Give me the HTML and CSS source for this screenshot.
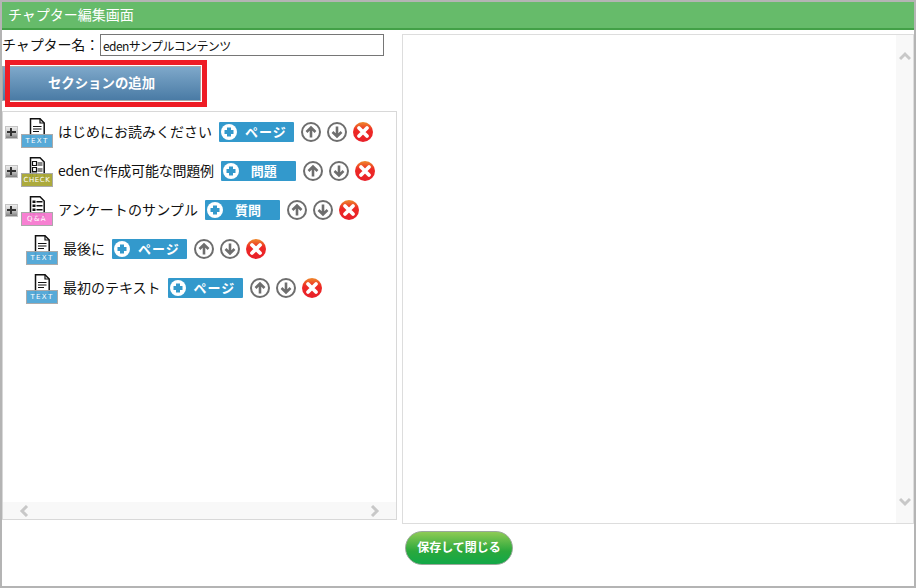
FILE: index.html
```html
<!DOCTYPE html>
<html lang="ja">

<head>
    <meta charset="utf-8">
    <title>チャプター編集画面</title>
    <link rel="stylesheet" href="styles.css">
</head>

<body>
<svg class="defs" width="0" height="0">
    <symbol id="doc-text" viewBox="0 0 16 22">
        <path d="M1.5 .8H11L15.2 5V21.3H1.500Z" fill="#fff" stroke="#111" stroke-width="1.500"/>
        <path d="M11 .8V5H15.200" fill="none" stroke="#111" stroke-width="1.200"/>
        <path d="M4 8.500H12.500M4 11H12.500M4 13.500H10" stroke="#111" stroke-width="1.200"/>
    </symbol>
    <symbol id="doc-check" viewBox="0 0 16 22">
        <path d="M1.500 .8H11L15.200 5V21.300H1.500Z" fill="#fff" stroke="#111" stroke-width="1.500"/>
        <path d="M3.500 4.500H7.500V8.500H3.500ZM3.500 10.500H7.500V14.500H3.500ZM3.500 16H7.500V20H3.500Z" fill="#fff" stroke="#111" stroke-width="1.200"/>
        <path d="M8.500 6H13.500M8.500 8H13.500M8.500 12H13.500M8.500 14H13.500" stroke="#111" stroke-width="1.200"/>
    </symbol>
    <symbol id="doc-qa" viewBox="0 0 16 22">
        <path d="M1.500 .8H11L15.200 5V21.300H1.500Z" fill="#fff" stroke="#111" stroke-width="1.500"/>
        <path d="M3.500 4.500H6.500V7H3.500ZM3.500 8.500H6.500V11H3.500ZM3.500 12.500H6.500V15H3.500ZM3.500 16.500H6.500V19H3.500Z" fill="#111"/>
        <path d="M7.500 5.700H13.500M7.500 9.700H13.500M7.500 13.700H13.500M7.500 17.700H13.500" stroke="#111" stroke-width="1.500"/>
    </symbol>
    <symbol id="ico-add" viewBox="0 0 20 20">
        <circle cx="10" cy="10" r="8" fill="#fff"/>
        <path d="M10 5.500V14.500M5.500 10H14.500" stroke="#3399cc" stroke-width="4"/>
    </symbol>
    <symbol id="ico-up" viewBox="0 0 20 20">
        <circle cx="10" cy="10" r="9" fill="#fff" stroke="#6e6e6e" stroke-width="2"/>
        <path d="M10 15.500V5.500M5.500 10L10 5.500L14.500 10" fill="none" stroke="#6e6e6e" stroke-width="2.600"/>
    </symbol>
    <symbol id="ico-down" viewBox="0 0 20 20">
        <circle cx="10" cy="10" r="9" fill="#fff" stroke="#6e6e6e" stroke-width="2"/>
        <path d="M10 4.500V14.500M5.500 10L10 14.500L14.500 10" fill="none" stroke="#6e6e6e" stroke-width="2.600"/>
    </symbol>
    <linearGradient id="del-grad" x1="0" y1="0" x2="0" y2="1">
        <stop offset="0" stop-color="#ee8a2c"/>
        <stop offset=".4" stop-color="#ee2a24"/>
        <stop offset="1" stop-color="#e8202a"/>
    </linearGradient>
    <symbol id="ico-del" viewBox="0 0 20 20">
        <circle cx="10" cy="10" r="10" fill="url(#del-grad)"/>
        <path d="M6 6L14 14M14 6L6 14" stroke="#fff" stroke-width="3.800" stroke-linecap="round"/>
    </symbol>
</svg>

<div class="frame">
    <div class="header">チャプター編集画面</div>

    <div class="content">
        <div class="leftCol">
            <div class="nameRow">
                <label for="chapterName">チャプター名：</label>
                <input type="text" id="chapterName" value="edenサンプルコンテンツ"/>
            </div>
            <div class="addRow">
                <button class="addSection">セクションの追加</button>
                <div class="redMark"></div>
            </div>

            <div class="treeBox">
                <div class="tree">
                    <div class="treeRow">
                        <i class="plus"></i>
                        <span class="fileIcon">
                            <svg width="16" height="22"><use href="#doc-text"/></svg>
                            <b class="tag tagText">TEXT</b>
                        </span>
                        <span class="label">はじめにお読みください</span>
                        <button class="addItem"><svg width="20" height="20"><use href="#ico-add"/></svg><span class="addPage">ページ</span></button>
                        <svg class="act" width="20" height="20"><use href="#ico-up"/></svg>
                        <svg class="act" width="20" height="20"><use href="#ico-down"/></svg>
                        <svg class="act" width="20" height="20"><use href="#ico-del"/></svg>
                    </div>
                    <div class="treeRow">
                        <i class="plus"></i>
                        <span class="fileIcon">
                            <svg width="16" height="22"><use href="#doc-check"/></svg>
                            <b class="tag tagCheck">CHECK</b>
                        </span>
                        <span class="label labelTight">edenで作成可能な問題例</span>
                        <button class="addItem"><svg width="20" height="20"><use href="#ico-add"/></svg><span class="addWide">問題</span></button>
                        <svg class="act" width="20" height="20"><use href="#ico-up"/></svg>
                        <svg class="act" width="20" height="20"><use href="#ico-down"/></svg>
                        <svg class="act" width="20" height="20"><use href="#ico-del"/></svg>
                    </div>
                    <div class="treeRow">
                        <i class="plus"></i>
                        <span class="fileIcon">
                            <svg width="16" height="22"><use href="#doc-qa"/></svg>
                            <b class="tag tagQa">Q&amp;A</b>
                        </span>
                        <span class="label labelWide">アンケートのサンプル</span>
                        <button class="addItem"><svg width="20" height="20"><use href="#ico-add"/></svg><span class="addWide">質問</span></button>
                        <svg class="act" width="20" height="20"><use href="#ico-up"/></svg>
                        <svg class="act" width="20" height="20"><use href="#ico-down"/></svg>
                        <svg class="act" width="20" height="20"><use href="#ico-del"/></svg>
                    </div>
                    <div class="treeRow leaf">
                        <span class="fileIcon">
                            <svg width="16" height="22"><use href="#doc-text"/></svg>
                            <b class="tag tagText">TEXT</b>
                        </span>
                        <span class="label">最後に</span>
                        <button class="addItem"><svg width="20" height="20"><use href="#ico-add"/></svg><span class="addPage">ページ</span></button>
                        <svg class="act" width="20" height="20"><use href="#ico-up"/></svg>
                        <svg class="act" width="20" height="20"><use href="#ico-down"/></svg>
                        <svg class="act" width="20" height="20"><use href="#ico-del"/></svg>
                    </div>
                    <div class="treeRow leaf">
                        <span class="fileIcon">
                            <svg width="16" height="22"><use href="#doc-text"/></svg>
                            <b class="tag tagText">TEXT</b>
                        </span>
                        <span class="label">最初のテキスト</span>
                        <button class="addItem"><svg width="20" height="20"><use href="#ico-add"/></svg><span class="addPage">ページ</span></button>
                        <svg class="act" width="20" height="20"><use href="#ico-up"/></svg>
                        <svg class="act" width="20" height="20"><use href="#ico-down"/></svg>
                        <svg class="act" width="20" height="20"><use href="#ico-del"/></svg>
                    </div>
                </div>
                <div class="hScroll">
                    <svg width="10" height="12" viewBox="0 0 10 12"><path d="M8 1L3 6L8 11" fill="none" stroke="#c8c8c8" stroke-width="3"/></svg>
                    <svg width="10" height="12" viewBox="0 0 10 12"><path d="M2 1L7 6L2 11" fill="none" stroke="#c8c8c8" stroke-width="3"/></svg>
                </div>
            </div>
        </div>

        <div class="preview">
            <div class="vScroll">
                <svg width="12" height="10" viewBox="0 0 12 10"><path d="M1 8L6 3L11 8" fill="none" stroke="#c8c8c8" stroke-width="3"/></svg>
                <svg width="12" height="10" viewBox="0 0 12 10"><path d="M1 2L6 7L11 2" fill="none" stroke="#c8c8c8" stroke-width="3"/></svg>
            </div>
        </div>
    </div>

    <div class="footer">
        <button class="saveBtn">保存して閉じる</button>
    </div>
</div>
</body>

</html>
```

FILE: styles.css
```css
* {
    margin: 0;
    padding: 0;
    box-sizing: border-box;
}

body {
    width: 916px;
    height: 588px;
    overflow: hidden;
    background-color: #FFFFFF;
    font-family: "Noto Sans CJK JP", "Liberation Sans", sans-serif;
    color: #111111;
}

.defs {
    position: absolute;
}

.frame {
    width: 916px;
    height: 588px;
    border: 2px solid #b4b4b4;
    display: flex;
    flex-direction: column;
}

.header {
    height: 28px;
    padding-left: 6px;
    background-color: #66bb6a;
    border-bottom: 2px solid #43a047;
    color: #FFFFFF;
    font-size: 14px;
    line-height: 25px;
}

.content {
    height: 490px;
    margin-top: 4px;
    display: flex;
    gap: 5px;
}

.leftCol {
    width: 395px;
}

.nameRow {
    height: 22px;
    display: flex;
    align-items: center;
    font-size: 14px;
}

.nameRow label {
    width: 98px;
    white-space: nowrap;
    letter-spacing: -.1px;
    padding-bottom: 2px;
}

.nameRow input {
    width: 284px;
    height: 22px;
    padding-left: 2px;
    border: 1px solid #767676;
    font-family: "Noto Sans CJK JP", "Liberation Sans", sans-serif;
    font-size: 12px;
    letter-spacing: -.6px;
    color: #111111;
}

.addRow {
    position: relative;
    height: 55px;
}

.addSection {
    display: block;
    width: 199px;
    height: 35px;
    padding-bottom: 3px;
    position: relative;
    top: 10px;
    border: 1px solid #a8a8a8;
    background: linear-gradient(#7ea8ca, #4a7ba5);
    color: #FFFFFF;
    font-family: inherit;
    font-size: 13.4px;
    font-weight: bold;
}

/* 赤枠 (注釈) */
.redMark {
    position: absolute;
    top: 4px;
    left: 3px;
    width: 202px;
    height: 47px;
    border: 5px solid #ee1c25;
}

.treeBox {
    height: 409px;
    border: 1px solid #d8d8d8;
    display: flex;
    flex-direction: column;
}

.tree {
    flex: 1;
}

.treeRow {
    height: 39px;
    padding-left: 1px;
    display: flex;
    align-items: center;
    white-space: nowrap;
}

.treeRow.leaf {
    padding-left: 23px;
}

.plus {
    display: block;
    width: 13px;
    height: 13px;
    margin: 2px 3px 0 1px;
    position: relative;
    background: linear-gradient(#ececec, #c8c8c8 50%, #808080);
    border: 1px solid #c4c4c4;
}

.plus::before {
    content: "";
    position: absolute;
    left: 1px;
    top: 4px;
    width: 9px;
    height: 2px;
    background-color: #333333;
}

.plus::after {
    content: "";
    position: absolute;
    left: 4px;
    top: 1px;
    width: 2px;
    height: 8px;
    background-color: #333333;
}

.fileIcon {
    display: block;
    width: 32px;
    height: 30px;
    margin-top: 3px;
    position: relative;
    text-align: center;
}

.fileIcon svg {
    display: block;
    margin: 0 auto;
}

.tag {
    display: block;
    position: absolute;
    left: 0;
    bottom: 0;
    width: 32px;
    height: 14px;
    border: 1px solid #a6a6a6;
    color: #FFFFFF;
    font-family: "DejaVu Sans", sans-serif;
    font-size: 7px;
    font-weight: normal;
    letter-spacing: 1.4px;
    line-height: 13px;
    opacity: .95;
    overflow: hidden;
}

.tagText {
    background-color: #4fa6d6;
}

.tagCheck {
    background-color: #a8a632;
    letter-spacing: .6px;
}

.tagQa {
    background-color: #f77ad0;
}

.label {
    margin-left: 5px;
    font-size: 14px;
    line-height: 20px;
    position: relative;
    top: -1px;
}

.labelTight {
    letter-spacing: -.23px;
}

.labelWide {
    letter-spacing: .1px;
}

.addItem {
    width: 75px;
    height: 20px;
    margin: 0 7px;
    display: flex;
    align-items: center;
    background-color: #3399cc;
    border: none;
    border-radius: 1px;
    color: #FFFFFF;
    font-family: inherit;
    font-size: 13px;
    font-weight: 700;
}

.addItem svg {
    flex: none;
}

.addPage {
    margin-left: 6px;
    letter-spacing: 1px;
}

.addWide {
    margin-left: 10px;
    letter-spacing: 0;
}

.act {
    margin-right: 6px;
    flex: none;
}

.hScroll {
    height: 17px;
    padding: 0 16px;
    display: flex;
    align-items: center;
    justify-content: space-between;
    background-color: #f8f8f8;
}

.preview {
    width: 513px;
    height: 490px;
    border: 1px solid #dddddd;
    display: flex;
    justify-content: flex-end;
}

.vScroll {
    width: 17px;
    padding: 16px 0;
    display: flex;
    flex-direction: column;
    align-items: center;
    justify-content: space-between;
    background-color: #f8f8f8;
}

.footer {
    display: flex;
    justify-content: center;
    padding: 7px 0 0 2px;
}

.saveBtn {
    width: 108px;
    height: 34px;
    padding-bottom: 3px;
    border: 1px solid #9aa89a;
    border-radius: 17px;
    background: linear-gradient(#8ecb55, #2aa83c 60%, #12a848);
    color: #FFFFFF;
    font-family: inherit;
    font-size: 12px;
    font-weight: bold;
}
```
